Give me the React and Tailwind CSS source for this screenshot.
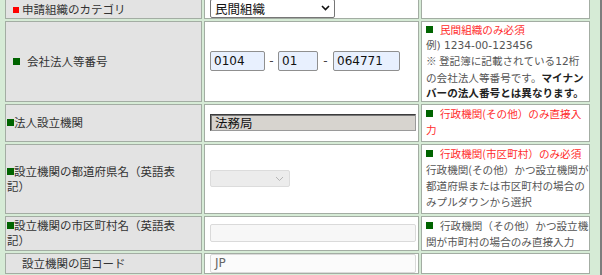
import React from "react";

const jp = { fontFamily: '"Noto Sans CJK JP", "Noto Sans", sans-serif' };
const latin = { fontFamily: '"DejaVu Sans", "Noto Sans CJK JP", sans-serif' };

function Mark({ red }) {
  return (
    <span
      className={
        red
          ? "inline-block w-[6px] h-[6px] bg-[#ff0000] mr-[3px] align-[1px]"
          : "inline-block w-[7px] h-[7px] bg-[#006400] align-[1px]"
      }
    />
  );
}

function Chevron({ light }) {
  return (
    <svg
      width="9"
      height="6"
      viewBox="0 0 9 6"
      className={`absolute top-1/2 -translate-y-1/2 ${light ? "right-[5px]" : "right-[4px]"}`}
    >
      <path
        d="M1 1 L4.5 4.5 L8 1"
        fill="none"
        stroke={light ? "#b5b5b5" : "#111"}
        strokeWidth={light ? "1" : "1.6"}
      />
    </svg>
  );
}

export default function App() {
  const label = "bg-[#e3e3e3] border border-[#a3ada3] text-[11.5px] leading-[15px] text-[#333] align-middle";
  const cell = "bg-white border border-[#a3ada3] align-middle pl-[5px]";
  const note = "bg-white border border-[#a3ada3] align-top pl-[4px] text-[10.6px] leading-[15.6px] text-[#555] whitespace-nowrap overflow-hidden";

  return (
    <div
      className="w-[602px] h-[275px] overflow-hidden bg-[#d6ebd6] border-r-2 border-[#7d7d7d]"
      style={jp}
    >
      <table className="table-fixed border-separate border-spacing-[2px] w-[589px] ml-[3px] -mt-[5px]">
        <tbody>
          <tr className="h-[22px]">
            <td className={`${label} w-[197px] pl-[7px] pt-[3px]`}>
              <Mark red />
              申請組織のカテゴリ
            </td>
            <td className={`${cell} w-[215px]`}>
              <div className="relative w-[125px] h-[19px] border border-[#767676] rounded-[2px] bg-white">
                <span className="absolute left-[4px] top-[1px] text-[12.5px] leading-[16px] text-[#111]">民間組織</span>
                <Chevron />
              </div>
            </td>
            <td className={`${note} w-[169px]`}></td>
          </tr>

          <tr className="h-[80px]">
            <td className={`${label} pl-[7px]`}>
              <Mark />
              <span className="ml-[7px]">会社法人等番号</span>
            </td>
            <td className={cell}>
              <div className="flex items-center text-[12px] text-[#111]" style={latin}>
                <div className="w-[55px] h-[20px] border border-[#8f8f8f] rounded-[2px] bg-[#e8f0fe] pl-[3px] leading-[18px]">0104</div>
                <span className="w-[13px] text-center text-[#444]">-</span>
                <div className="w-[40px] h-[20px] border border-[#8f8f8f] rounded-[2px] bg-[#e8f0fe] pl-[3px] leading-[18px]">01</div>
                <span className="w-[15px] text-center text-[#444]">-</span>
                <div className="w-[67px] h-[20px] border border-[#8f8f8f] rounded-[2px] bg-[#e8f0fe] pl-[3px] leading-[18px]">064771</div>
              </div>
            </td>
            <td className={note}>
              <div className="text-[#ff2b2b]">
                <Mark />
                <span className="ml-[7px]">民間組織のみ必須</span>
              </div>
              <div style={latin}>例) 1234-00-123456</div>
              <div>
                ※ 登記簿に記載されている<span style={latin}>12</span>桁
              </div>
              <div>
                の会社法人等番号です。<b className="text-[#222]">マイナン</b>
              </div>
              <div className="font-bold text-[#222]">バーの法人番号とは異なります。</div>
            </td>
          </tr>

          <tr className="h-[38px]">
            <td className={`${label} pl-[1px]`}>
              <Mark />
              法人設立機関
            </td>
            <td className={cell}>
              <div className="w-[206px] h-[17px] border border-[#3c3c3c] border-b-[#9a9a9a] border-r-[#9a9a9a] shadow-[inset_1px_1px_0_#777] bg-[#d7d4cf] pl-[4px] text-[12.5px] leading-[15px] text-[#111]">
                法務局
              </div>
            </td>
            <td className={`${note} pt-[1px] text-[#ff2b2b]`}>
              <div>
                <Mark />
                <span className="ml-[7px]">行政機関(その他）のみ直接入</span>
              </div>
              <div>力</div>
            </td>
          </tr>

          <tr className="h-[70px]">
            <td className={`${label} pl-[1px]`}>
              <div>
                <Mark />
                設立機関の都道府県名（英語表
              </div>
              <div>記）</div>
            </td>
            <td className={cell}>
              <div className="relative w-[80px] h-[17px] border border-[#dcdcdc] rounded-[2px] bg-[#ececec]">
                <Chevron light />
              </div>
            </td>
            <td className={`${note} pt-[1px] leading-[16px]`}>
              <div className="text-[#ff2b2b]">
                <Mark />
                <span className="ml-[7px]">行政機関(市区町村）のみ必須</span>
              </div>
              <div>行政機関(その他）かつ設立機関が</div>
              <div>都道府県または市区町村の場合の</div>
              <div>みプルダウンから選択</div>
            </td>
          </tr>

          <tr className="h-[35px]">
            <td className={`${label} pl-[1px]`}>
              <div>
                <Mark />
                設立機関の市区町村名（英語表
              </div>
              <div>記）</div>
            </td>
            <td className={cell}>
              <div className="w-[206px] h-[18px] border border-[#dadada] rounded-[2px] bg-[#f7f7f7]" />
            </td>
            <td className={`${note} pt-[1px]`}>
              <div>
                <Mark />
                <span className="ml-[7px]">行政機関（その他）かつ設立機</span>
              </div>
              <div>関が市町村の場合のみ直接入力</div>
            </td>
          </tr>

          <tr className="h-[21px]">
            <td className={`${label} pl-[16px]`}>設立機関の国コード</td>
            <td className={cell}>
              <div className="w-[206px] h-[19px] border border-[#dadada] rounded-[2px] bg-[#fbfbfb] pl-[4px] text-[12px] leading-[17px] text-[#666]" style={latin}>
                JP
              </div>
            </td>
            <td className={note}></td>
          </tr>
        </tbody>
      </table>
    </div>
  );
}
